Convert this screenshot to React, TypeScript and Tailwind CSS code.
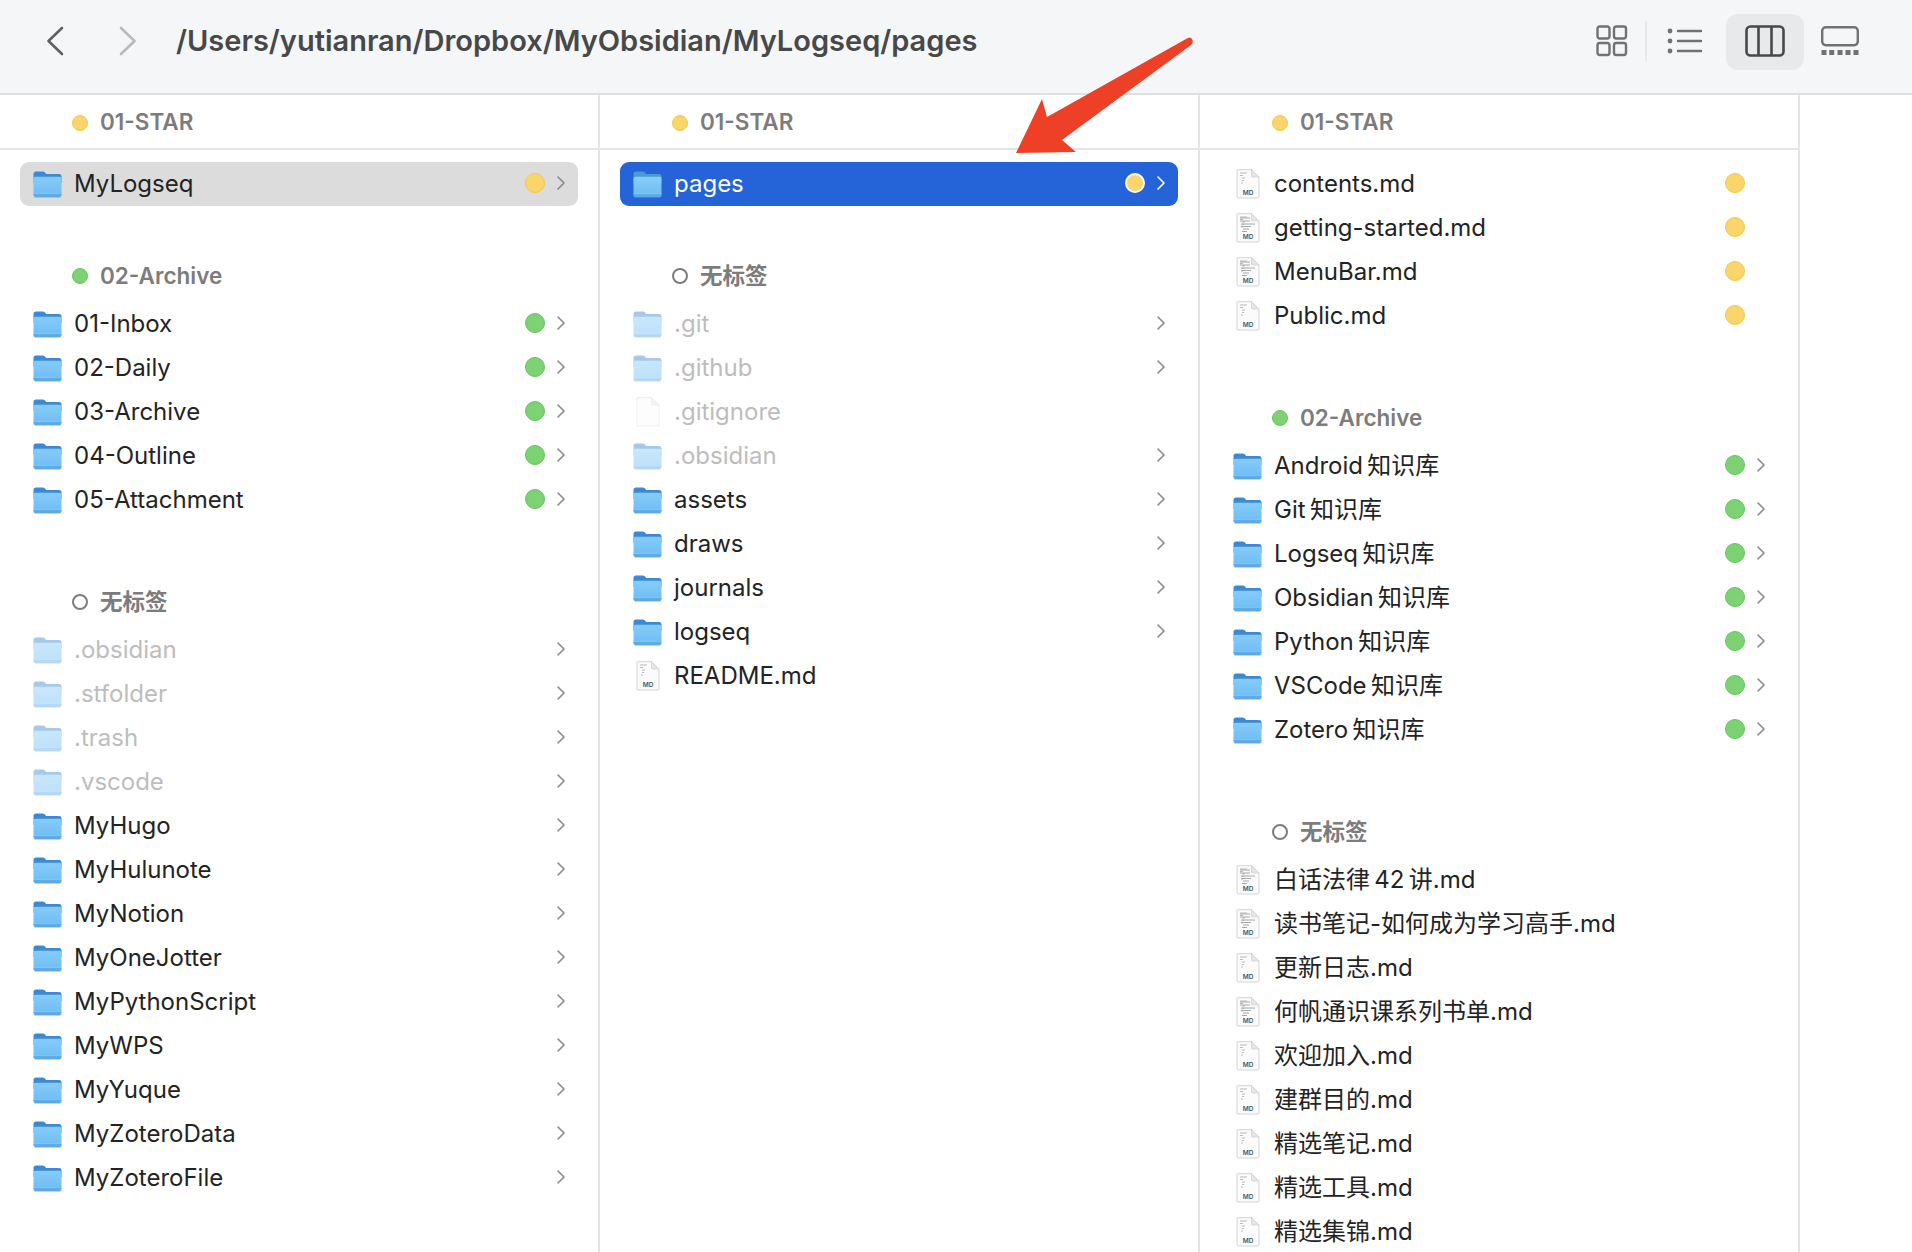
import React from "react";

const FONT = "font-['Inter','Noto_Sans_CJK_SC','Liberation_Sans',sans-serif]";

type Tag = "y" | "g" | undefined;
type Item = { name: string; kind: "folder" | "file" | "blank"; tag?: Tag; chevron?: boolean; dim?: boolean };

function FolderIcon({ dim, selected }: { dim?: boolean; selected?: boolean }) {
  return (
    <svg width="29" height="27" viewBox="0 0 29 27" className={dim ? "shrink-0 opacity-45" : "shrink-0"}>
      <path d="M0.5 3 Q0.5 0.5 3 0.5 H9.5 Q11 0.5 12 1.6 L13.2 3 H26 Q28.5 3 28.5 5.5 V12 H0.5 Z" fill={selected ? "#4a9bd0" : "#3a8ad6"} />
      <path d="M0.5 7.6 Q0.5 5.8 2.4 5.8 H26.6 Q28.5 5.8 28.5 7.6 V23.8 Q28.5 26 26.2 26 H2.8 Q0.5 26 0.5 23.8 Z" fill="url(#folderBody)" />
      <path d="M0.5 23.2 H28.5 V24 Q28.5 26 26.2 26 H2.8 Q0.5 26 0.5 24 Z" fill="#5ea8e6" />
      <path d="M0.5 22.4 H28.5" stroke="#8cc7f2" strokeWidth="0.6" />
      <path d="M1.5 26.6 H27.5" stroke="#9a9a9a" strokeWidth="0.8" opacity="0.6" />
    </svg>
  );
}

function FileIcon({ blank, dense }: { blank?: boolean; dense?: boolean }) {
  return (
    <svg width="24" height="30" viewBox="0 0 24 30" className={blank ? "shrink-0 opacity-40" : "shrink-0"}>
      <path d="M1 1.5 Q1 0.7 1.8 0.7 H15.5 L23 8 V28.2 Q23 29 22.2 29 H1.8 Q1 29 1 28.2 Z" fill="#fbfbfb" stroke="#cfcfcf" strokeWidth="0.9" />
      <path d="M15.5 0.7 V7 Q15.5 8 16.5 8 H23 Z" fill="#e6e6e6" stroke="#cfcfcf" strokeWidth="0.7" />
      {!blank && (
        <>
          <path d="M4 4 H11 M4 6.5 H7 M6 9 H9 M6 11.5 H8 M5 14 H7" stroke="#b9b9b9" strokeWidth="1.1" />
          {dense && <path d="M4 5 H14 M4 8 H14 M5 11 H19 M5 13.5 H15 M7 16 H13 M6 18.5 H11" stroke="#a8a8a8" strokeWidth="1.1" />}
          <text x="12" y="26" textAnchor="middle" fontSize="6.5" fontWeight="600" fill="#555" fontFamily="Inter, sans-serif">MD</text>
        </>
      )}
    </svg>
  );
}

function Chevron({ white }: { white?: boolean }) {
  return (
    <svg width="10" height="16" viewBox="0 0 10 16" className="shrink-0">
      <path d="M2 2 L8 8 L2 14" fill="none" stroke={white ? "#ffffff" : "#8a8a8a"} strokeWidth="1.6" strokeLinecap="round" strokeLinejoin="round" />
    </svg>
  );
}

function RowDot({ tag, selected }: { tag: Tag; selected?: boolean }) {
  if (!tag) return null;
  const color = tag === "y" ? "bg-[#f9d56b] border-[#f4c845]" : "bg-[#7dd273] border-[#63c65b]";
  return <span className={`w-5 h-5 rounded-full border ${selected ? "border-2 border-white bg-[#f9d56b]" : color}`} />;
}

function Row({ item, sel }: { item: Item; sel?: "gray" | "blue" }) {
  const bg = sel === "gray" ? "bg-[#dcdcdc]" : sel === "blue" ? "bg-[#2563d9]" : "";
  const fg = sel === "blue" ? "text-white" : item.dim ? "text-[#bdbdbd]" : "text-[#232323]";
  return (
    <div className={`h-11 mx-5 pl-[13px] pr-[12px] flex items-center rounded-[9px] ${bg}`}>
      {item.kind === "folder" ? <FolderIcon dim={item.dim} selected={sel === "blue"} /> : <span className="w-[29px] flex justify-center shrink-0"><FileIcon blank={item.kind === "blank"} dense={item.name.length % 2 === 0} /></span>}
      <span className={`ml-3 text-[24px] leading-none whitespace-nowrap ${fg}`}>{item.name}</span>
      <span className="ml-auto mb-[2px] flex items-center gap-[11px]">
        <RowDot tag={item.tag} selected={sel === "blue"} />
        <span className={item.chevron ? "flex" : "flex invisible"}><Chevron white={sel === "blue"} /></span>
      </span>
    </div>
  );
}

function Header({ title, tag, first, gap }: { title: string; tag?: Tag; first?: boolean; gap?: "small" | "big" }) {
  const dot =
    tag === "y" ? "bg-[#f9d56b] border border-[#f4c845]" : tag === "g" ? "bg-[#7dd273] border border-[#63c65b]" : "border-2 border-[#7d7d7d]";
  const cls = first
    ? "h-[55px] pt-[2px] border-b-2 border-[#e4e4e4] mb-3"
    : gap === "small"
      ? "h-11 mt-[48px] mb-[4px]"
      : "h-11 mt-[58px] mb-[4px]";
  return (
    <div className={`${cls} pl-[72px] flex items-center gap-[12px]`}>
      <span className={`w-4 h-4 rounded-full ${dot}`} />
      <span className="text-[22.5px] leading-none font-semibold text-[#7c7c7c]">{title}</span>
    </div>
  );
}

const f = (name: string, tag?: Tag, dim?: boolean): Item => ({ name, kind: "folder", tag, chevron: true, dim });
const d = (name: string, tag?: Tag): Item => ({ name, kind: "file", tag });

const col1Archive = ["01-Inbox", "02-Daily", "03-Archive", "04-Outline", "05-Attachment"].map((n) => f(n, "g"));
const col1None = [
  ...[".obsidian", ".stfolder", ".trash", ".vscode"].map((n) => f(n, undefined, true)),
  ...["MyHugo", "MyHulunote", "MyNotion", "MyOneJotter", "MyPythonScript", "MyWPS", "MyYuque", "MyZoteroData", "MyZoteroFile"].map((n) => f(n)),
];
const col2None: Item[] = [
  f(".git", undefined, true),
  f(".github", undefined, true),
  { name: ".gitignore", kind: "blank", dim: true },
  f(".obsidian", undefined, true),
  f("assets"),
  f("draws"),
  f("journals"),
  f("logseq"),
  d("README.md"),
];
const col3Star = ["contents.md", "getting-started.md", "MenuBar.md", "Public.md"].map((n) => d(n, "y"));
const col3Archive = ["Android\u2009知识库", "Git\u2009知识库", "Logseq\u2009知识库", "Obsidian\u2009知识库", "Python\u2009知识库", "VSCode\u2009知识库", "Zotero\u2009知识库"].map((n) => f(n, "g"));
const col3None = ["白话法律\u200942\u2009讲.md", "读书笔记-如何成为学习高手.md", "更新日志.md", "何帆通识课系列书单.md", "欢迎加入.md", "建群目的.md", "精选笔记.md", "精选工具.md", "精选集锦.md"].map((n) => d(n));

function Toolbar() {
  return (
    <div className="h-[95px] pb-[12px] bg-[#f5f6f8] border-b-2 border-[#dfe0e2] flex items-center">
      <svg width="18" height="30" viewBox="0 0 18 30" className="ml-[46px] shrink-0">
        <path d="M16 2 L2.5 15 L16 28" fill="none" stroke="#5f6062" strokeWidth="2.6" strokeLinecap="round" strokeLinejoin="round" />
      </svg>
      <svg width="18" height="30" viewBox="0 0 18 30" className="ml-[55px] shrink-0">
        <path d="M2 2 L15.5 15 L2 28" fill="none" stroke="#b9babc" strokeWidth="2.6" strokeLinecap="round" strokeLinejoin="round" />
      </svg>
      <span className="ml-[39px] text-[29px] leading-none font-semibold text-[#474849] whitespace-nowrap">/Users/yutianran/Dropbox/MyObsidian/MyLogseq/pages</span>
      <div className="ml-auto flex items-center mr-[53px]">
        <svg width="32" height="32" viewBox="0 0 32 32" className="shrink-0">
          <g fill="none" stroke="#717274" strokeWidth="2.4">
            <rect x="1.5" y="1.5" width="12" height="12" rx="2.2" />
            <rect x="18" y="1.5" width="12" height="12" rx="2.2" />
            <rect x="1.5" y="18" width="12" height="12" rx="2.2" />
            <rect x="18" y="18" width="12" height="12" rx="2.2" />
          </g>
        </svg>
        <span className="ml-[17px] w-[2px] h-10 bg-[#e7e8ea]" />
        <svg width="36" height="28" viewBox="0 0 36 28" className="ml-[20px] shrink-0">
          <g fill="#717274">
            <circle cx="3" cy="4" r="2.4" />
            <circle cx="3" cy="14" r="2.4" />
            <circle cx="3" cy="24" r="2.4" />
          </g>
          <path d="M11 4 H34 M11 14 H34 M11 24 H34" stroke="#717274" strokeWidth="2.4" strokeLinecap="round" />
        </svg>
        <span className="ml-[23px] mt-[3px] w-[78px] h-14 rounded-[12px] bg-[#e8e9eb] flex items-center justify-center">
          <svg width="40" height="32" viewBox="0 0 40 32" className="mb-[3px]">
            <rect x="1.5" y="1.5" width="37" height="29" rx="4" fill="none" stroke="#474849" strokeWidth="2.6" />
            <path d="M13.5 1.5 V30.5 M26.5 1.5 V30.5" stroke="#474849" strokeWidth="2.6" />
          </svg>
        </span>
        <svg width="38" height="30" viewBox="0 0 38 30" className="ml-[17px] shrink-0">
          <rect x="1.2" y="1.2" width="35.6" height="18" rx="3.6" fill="none" stroke="#717274" strokeWidth="2.4" />
          <g fill="#717274">
            <rect x="0.5" y="24" width="5" height="5" />
            <rect x="8.2" y="24" width="5" height="5" />
            <rect x="16.5" y="24" width="5" height="5" />
            <rect x="24.5" y="24" width="5" height="5" />
            <rect x="32.5" y="24" width="5" height="5" />
          </g>
        </svg>
      </div>
    </div>
  );
}

function Column({ children }: { children: React.ReactNode }) {
  return <div className="w-[600px] shrink-0 border-r-2 border-[#e4e4e4]">{children}</div>;
}

export default function App() {
  return (
    <div className={`relative w-[1912px] h-[1252px] overflow-hidden bg-white ${FONT}`}>
      <svg width="0" height="0" className="absolute">
        <defs>
          <linearGradient id="folderBody" x1="0" y1="0" x2="0" y2="1">
            <stop offset="0" stopColor="#86ccf8" />
            <stop offset="1" stopColor="#6dbbf3" />
          </linearGradient>
        </defs>
      </svg>
      <Toolbar />
      <div className="flex h-[1157px]">
        <Column>
          <Header first title="01-STAR" tag="y" />
          <Row item={f("MyLogseq", "y")} sel="gray" />
          <Header gap="small" title="02-Archive" tag="g" />
          {col1Archive.map((i) => <Row key={i.name} item={i} />)}
          <Header title="无标签" />
          {col1None.map((i) => <Row key={i.name} item={i} />)}
        </Column>
        <Column>
          <Header first title="01-STAR" tag="y" />
          <Row item={f("pages", "y")} sel="blue" />
          <Header gap="small" title="无标签" />
          {col2None.map((i) => <Row key={i.name} item={i} />)}
        </Column>
        <Column>
          <Header first title="01-STAR" tag="y" />
          {col3Star.map((i) => <Row key={i.name} item={i} />)}
          <Header title="02-Archive" tag="g" />
          {col3Archive.map((i) => <Row key={i.name} item={i} />)}
          <Header title="无标签" />
          {col3None.map((i) => <Row key={i.name} item={i} />)}
        </Column>
      </div>
      <svg width="1912" height="1252" viewBox="0 0 1912 1252" className="absolute inset-0 pointer-events-none">
        <path d="M1016 153 L1042 99 L1047 117 L1186 39 Q1190 36 1192 39 Q1194 42 1191 45 L1062 140 L1076 152 Z" fill="#ee4026" />
      </svg>
    </div>
  );
}
